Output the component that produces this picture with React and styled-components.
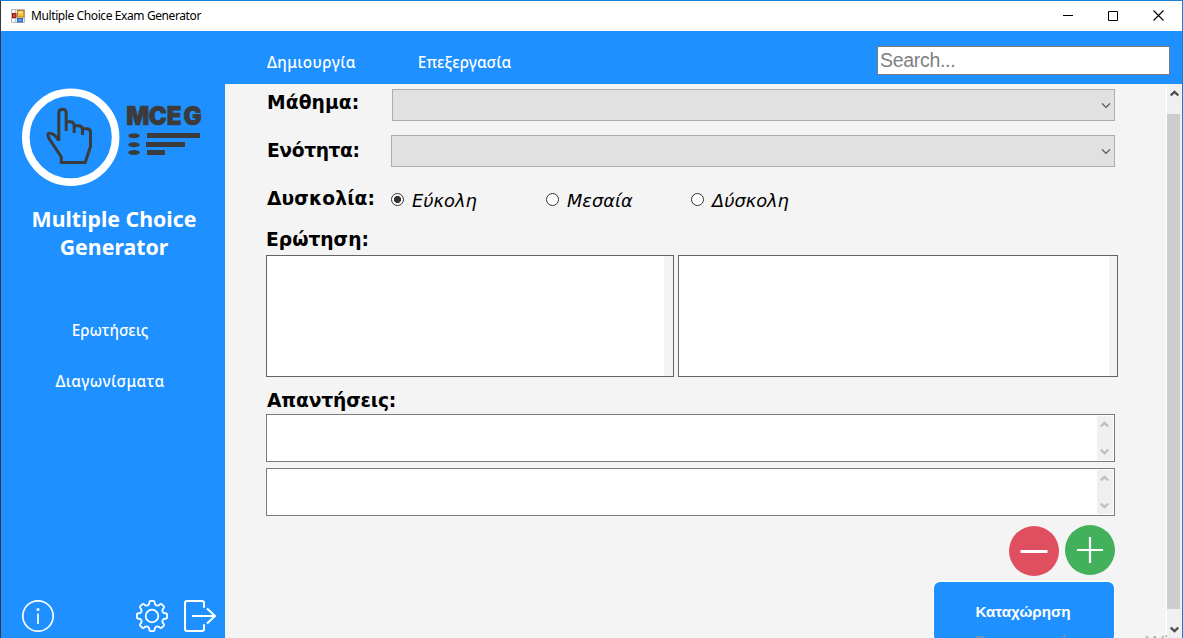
import React from "react";
import styled, { createGlobalStyle } from "styled-components";

const UI = '"Noto Sans", "Open Sans", sans-serif';
const TAHOMA = '"DejaVu Sans", sans-serif';
const ARIAL = '"Liberation Sans", Arial, sans-serif';

const Global = createGlobalStyle`
  * { box-sizing: border-box; }
  html, body { margin: 0; padding: 0; overflow: hidden; }
`;

const Window = styled.div`
  position: relative;
  width: 1183px;
  height: 638px;
  display: flex;
  flex-direction: column;
  overflow: hidden;
  background: #f4f4f4;
  border-top: 1px solid #1a80d4;
  border-right: 1px solid #1a80d4;
  border-left: 1px solid #2f3a45;
`;

const TitleBar = styled.header`
  height: 30px;
  flex: none;
  display: flex;
  align-items: center;
  padding-left: 10px;
  background: #fff;
`;

const TitleText = styled.h1`
  flex: 1;
  margin: 0 0 0 6px;
  font: 400 12px/16px ${UI};
  letter-spacing: -0.4px;
  color: #000;
  white-space: nowrap;
`;

const WindowButton = styled.button`
  width: 46px;
  height: 30px;
  padding: 0;
  border: 0;
  background: none;
  display: flex;
  align-items: center;
  justify-content: center;
`;

const Body = styled.div`
  flex: 1;
  min-height: 0;
  display: flex;
`;

const Sidebar = styled.aside`
  width: 224px;
  flex: none;
  display: flex;
  flex-direction: column;
  background: #1e90ff;
`;

const Logo = styled.svg`
  display: block;
  flex: none;
  margin: 53px 0 0 17px;
`;

const Brand = styled.h2`
  margin: 17px 0 0 2px;
  text-align: center;
  font: 700 21.3px/28px ${UI};
  color: #fff;
`;

const SideNav = styled.nav`
  flex: 1;
  display: flex;
  flex-direction: column;
  align-items: center;
  gap: 31px;
  margin: 59px 6px 0 0;
`;

const NavLink = styled.a`
  font: 500 15.3px/20px ${UI};
  letter-spacing: ${(p) => p.$spacing || "0"};
  color: #fff;
  white-space: nowrap;
`;

const SideFooter = styled.div`
  display: flex;
  align-items: center;
  gap: 14px;
  padding: 0 8px 5px 20px;
`;

const Spacer = styled.div`
  flex: 1;
`;

const Workspace = styled.div`
  flex: 1;
  min-width: 0;
  display: flex;
  flex-direction: column;
`;

const TopBar = styled.div`
  height: 53px;
  flex: none;
  display: flex;
  align-items: flex-start;
  padding: 21px 12px 0 42px;
  background: #1e90ff;
`;

const TopNav = styled.nav`
  flex: 1;
  display: flex;
  gap: 62px;
`;

const SearchBox = styled.input`
  width: 293px;
  height: 29px;
  margin-top: -6px;
  padding: 0 2px 1px;
  border: 1px solid #7a7a7a;
  border-radius: 0;
  outline: 0;
  background: #fff;
  font: 400 19.5px/24px ${ARIAL};
  letter-spacing: -0.3px;
  &::placeholder { color: #7f7f7f; opacity: 1; }
`;

const ScrollArea = styled.div`
  flex: 1;
  min-height: 0;
  display: flex;
`;

const Form = styled.form`
  flex: 1;
  min-width: 0;
  height: 554px;
  overflow: hidden;
  padding: 5px 0 0 41px;
`;

const FieldRow = styled.div`
  display: flex;
  width: 849px;
  height: 32px;
  margin-bottom: ${(p) => p.$gap || "14px"};
`;

const Label = styled.label`
  display: block;
  flex: none;
  width: ${(p) => p.$width || "auto"};
  height: 24px;
  margin-top: ${(p) => p.$top || "0"};
  margin-bottom: ${(p) => p.$bottom || "0"};
  padding-left: ${(p) => p.$indent || "1px"};
  font: 700 18.7px/24px ${TAHOMA};
  letter-spacing: ${(p) => p.$spacing || "0"};
  color: #000;
  white-space: nowrap;
`;

const Combo = styled.div`
  flex: 1;
  height: 32px;
  display: flex;
  align-items: center;
  justify-content: flex-end;
  padding-right: 3px;
  border: 1px solid #adadad;
  background: #e1e1e1;
`;

const RadioOption = styled.label`
  display: flex;
  align-items: center;
  width: ${(p) => p.$width};
  height: 32px;
  padding-top: 1px;
  font: italic 400 17.8px/24px ${TAHOMA};
  color: #000;
  white-space: nowrap;
`;

const RadioDot = styled.span`
  flex: none;
  width: 13px;
  height: 13px;
  margin: 0 8px 3px 0;
  border: 1px solid #333;
  border-radius: 50%;
  background: ${(p) => (p.$checked ? "radial-gradient(circle, #333 0 3.2px, #fff 3.9px)" : "#fff")};
`;

const Editors = styled.div`
  display: flex;
  gap: 4px;
  height: 122px;
`;

const Editor = styled.div`
  width: ${(p) => p.$width};
  border: 1px solid #646464;
  background: linear-gradient(to left, #f4f4f4 ${(p) => p.$gutter}, #fff ${(p) => p.$gutter});
`;

const Answer = styled.div`
  width: 849px;
  height: 48px;
  margin-bottom: 6px;
  padding: 1px;
  display: flex;
  justify-content: flex-end;
  border: 1px solid #7a7a7a;
  background: #fff;
`;

const MiniScroll = styled.div`
  width: 16px;
  display: flex;
  flex-direction: column;
  align-items: center;
  justify-content: space-between;
  padding: 5px 1px 5px 0;
  background: #f0f0f0;
`;

const RoundButtons = styled.div`
  width: 849px;
  display: flex;
  justify-content: flex-end;
  gap: 6px;
  padding-top: 3px;
`;

const RoundButton = styled.button`
  width: 50px;
  height: 50px;
  padding: 0;
  margin-top: ${(p) => p.$top || "0"};
  border: 0;
  border-radius: 50%;
  background: ${(p) => p.$color};
  display: flex;
  align-items: center;
  justify-content: center;
`;

const SubmitButton = styled.button`
  display: block;
  width: 180px;
  height: 60px;
  margin: 6px 0 0 668px;
  padding: 0 2px 1px 0;
  border: 0;
  border-radius: 6px;
  background: #1e90ff;
  box-shadow: 0 0 0 1px #fff;
  color: #fff;
  font: 700 15.2px/20px ${ARIAL};
`;

const ScrollBar = styled.div`
  width: 16px;
  flex: none;
  display: flex;
  flex-direction: column;
  align-items: center;
  padding: 6px 1px 5px 0;
  border-left: 1px solid #fff;
  background: #f0f0f0;
`;

const Thumb = styled.div`
  width: 13px;
  height: 495px;
  margin: 17px 1px 0 0;
  background: #cdcdcd;
`;

const Watermark = styled.div`
  position: absolute;
  left: 973px;
  top: 628px;
  width: 193px;
  height: 10px;
  overflow: hidden;
  font: 400 20px/28px ${UI};
  letter-spacing: -0.4px;
  color: rgba(150, 150, 150, 0.75);
  white-space: nowrap;
`;

const Chevron = ({ up, color = "#505050", stroke = 2.4 }) => (
  <svg width="9" height="7" viewBox="0 0 9 7" fill="none" stroke={color} strokeWidth={stroke}>
    <path d={up ? "M.7 5.500 4.500 1.900 8.300 5.500" : "M.7 1.500 4.500 5.100 8.300 1.500"} />
  </svg>
);

const ComboArrow = () => (
  <svg width="10" height="7" viewBox="0 0 10 7" fill="none" stroke="#505050" strokeWidth="1.200">
    <path d="M1 1.300 5 5.300 9 1.300" />
  </svg>
);

const AppIcon = () => (
  <svg width="14" height="14" viewBox="0 0 14 14">
    <path d="M.5.5h13v13H.5z" fill="#f4f4f4" stroke="#b9b9b9" />
    <path d="M4.500 1v12M1 9.500h12" stroke="#c4c4c4" />
    <rect x="6.500" y="1.500" width="6.500" height="6.500" fill="#f5c043" stroke="#b67d14" />
    <path d="M7.500 2.500h4v2h-4z" fill="#ffe59a" />
    <rect x="1.500" y="4.500" width="3.500" height="4" fill="#d8443a" stroke="#8e1a14" />
    <rect x="6.500" y="9.500" width="5" height="3.500" fill="#5b94ea" stroke="#3167be" />
  </svg>
);

const BrandLogo = () => (
  <Logo width="190" height="104" viewBox="18 84 190 104">
    <circle cx="70.700" cy="137.200" r="44.900" fill="none" stroke="#fff" strokeWidth="7.600" />
    <g fill="none" stroke="#3b3b3b" strokeWidth="3">
      <path d="M58.800 141V113q0-3.800 3.700-3.800t3.700 3.800V131" />
      <path d="M66.200 121.700h4q4 0 4 4V133M74.200 125.700h4.500q3.800 0 3.800 4V135" />
      <path d="M82.500 128.800h4.500q3.500 0 3.500 3.500V146.500L85.200 162.500H61.300V157L49.200 138.800q-2.600-5.300.3-5.600 4.500-.4 9.300 7.200" />
    </g>
    <text transform="scale(0.93 1)" x="135.800 160 179.300 197.200" y="125.200" fontFamily="Inter, sans-serif" fontWeight="900" fontSize="26" fill="#3b3b3b" stroke="#3b3b3b" strokeWidth="0.700">MCEG</text>
    <g fill="#3b3b3b">
      <ellipse cx="134" cy="135.800" rx="5.700" ry="2.500" />
      <ellipse cx="134" cy="144.700" rx="5.700" ry="2.500" />
      <ellipse cx="134" cy="152.600" rx="5.700" ry="2.500" />
      <path d="M147 133h53v5h-53zM146 142h39v5h-39zM147 150h18v5h-18z" />
    </g>
  </Logo>
);

const InfoIcon = () => (
  <svg width="34" height="34" viewBox="-17 -17 34 34" fill="none" stroke="#fff" strokeWidth="1.700">
    <circle r="15.200" />
    <path d="M0-2.500V8" />
    <circle cy="-6.600" r="1.500" fill="#fff" stroke="none" />
  </svg>
);

const polar = (radius, degrees) => {
  const a = (degrees * Math.PI) / 180;
  return `${(radius * Math.sin(a)).toFixed(2)} ${(-radius * Math.cos(a)).toFixed(2)}`;
};

const gearPath =
  Array.from({ length: 8 }, (_, i) => {
    const a = i * 45;
    return `${i ? "L" : "M"}${polar(13.2, a - 12)}Q${polar(15.4, a - 10.5)} ${polar(15.2, a - 5)}L${polar(15.2, a + 5)}Q${polar(15.4, a + 10.5)} ${polar(13.2, a + 12)}C${polar(11, a + 16)} ${polar(11, a + 29)} ${polar(13.2, a + 33)}`;
  }).join("") + "Z";

const GearIcon = () => (
  <svg width="34" height="34" viewBox="-17 -17 34 34" fill="none" stroke="#fff" strokeWidth="1.800" strokeLinejoin="round">
    <path d={gearPath} />
    <circle r="6.300" />
  </svg>
);

const ExitIcon = () => (
  <svg width="34" height="34" viewBox="183 599 34 34" fill="none" stroke="#fff" strokeWidth="2">
    <path d="M204 607.700V603q0-2-2-2h-15q-2 0-2 2v26q0 2 2 2h15q2 0 2-2v-4.700M192 616h23M207 608.500l8 7.500-8 7.500" />
  </svg>
);

const levels = [
  { text: "Εύκολη", width: "155px", checked: true },
  { text: "Μεσαία", width: "145px" },
  { text: "Δύσκολη", width: "110px" },
];

const answers = [1, 2];

export default function App() {
  return (
    <Window>
      <Global />
      <TitleBar>
        <AppIcon />
        <TitleText>Multiple Choice Exam Generator</TitleText>
        <WindowButton type="button">
          <svg width="12" height="10" stroke="#000"><path d="M2 4.500h10" /></svg>
        </WindowButton>
        <WindowButton type="button">
          <svg width="10" height="10" fill="none" stroke="#000"><path d="M.5.5h9v9h-9z" /></svg>
        </WindowButton>
        <WindowButton type="button">
          <svg width="12" height="12" stroke="#000" strokeWidth="1.100"><path d="M.5.5l10 10M10.500.5l-10 10" /></svg>
        </WindowButton>
      </TitleBar>
      <Body>
        <Sidebar>
          <BrandLogo />
          <Brand>Multiple Choice<br />Generator</Brand>
          <SideNav>
            <NavLink>Ερωτήσεις</NavLink>
            <NavLink $spacing="0.45px">Διαγωνίσματα</NavLink>
          </SideNav>
          <SideFooter>
            <InfoIcon />
            <Spacer />
            <GearIcon />
            <ExitIcon />
          </SideFooter>
        </Sidebar>
        <Workspace>
          <TopBar>
            <TopNav>
              <NavLink $spacing="0.4px">Δημιουργία</NavLink>
              <NavLink $spacing="0.15px">Επεξεργασία</NavLink>
            </TopNav>
            <SearchBox placeholder="Search..." />
          </TopBar>
          <ScrollArea>
            <Form>
              <FieldRow>
                <Label $width="126px" $top="2px" $spacing="0.1px">Μάθημα:</Label>
                <Combo><ComboArrow /></Combo>
              </FieldRow>
              <FieldRow $gap="17px">
                <Label $width="125px" $top="4px" $spacing="-0.4px">Ενότητα:</Label>
                <Combo><ComboArrow /></Combo>
              </FieldRow>
              <FieldRow $gap="12px">
                <Label $width="125px" $top="3px" $spacing="0.1px">Δυσκολία:</Label>
                {levels.map((level) => (
                  <RadioOption key={level.text} $width={level.width}>
                    <RadioDot $checked={level.checked} />
                    {level.text}
                  </RadioOption>
                ))}
              </FieldRow>
              <Label $bottom="3px" $indent="0">Ερώτηση:</Label>
              <Editors>
                <Editor $width="408px" $gutter="9px" />
                <Editor $width="440px" $gutter="8px" />
              </Editors>
              <Label $top="12px" $bottom="1px" $spacing="-0.15px">Απαντήσεις:</Label>
              {answers.map((n) => (
                <Answer key={n}>
                  <MiniScroll>
                    <Chevron up color="#bfbfbf" />
                    <Chevron color="#bfbfbf" />
                  </MiniScroll>
                </Answer>
              ))}
              <RoundButtons>
                <RoundButton type="button" $color="#e04f5f" $top="1px">
                  <svg width="28" height="28" stroke="#fff" strokeWidth="3"><path d="M.5 14.500h27" /></svg>
                </RoundButton>
                <RoundButton type="button" $color="#43b05c">
                  <svg width="28" height="28" stroke="#fff" strokeWidth="2.200"><path d="M1 14h26M14 1v26" /></svg>
                </RoundButton>
              </RoundButtons>
              <SubmitButton type="button">Καταχώρηση</SubmitButton>
            </Form>
            <ScrollBar>
              <Chevron up />
              <Thumb />
              <Spacer />
              <Chevron />
            </ScrollBar>
          </ScrollArea>
        </Workspace>
      </Body>
      <Watermark>Ενεργοποίηση των Windows</Watermark>
    </Window>
  );
}
